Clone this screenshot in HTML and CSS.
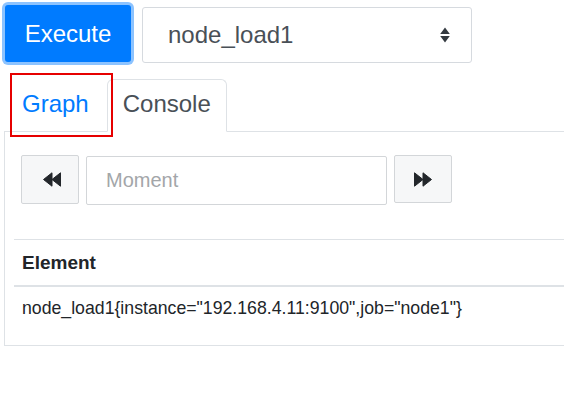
FILE: index.html
```html
<!DOCTYPE html>
<html lang="en">
<head>
<meta charset="utf-8">
<title>Prometheus</title>
<link rel="stylesheet" href="styles.css">
</head>
<body>
<div class="page">
  <div class="controls">
    <button class="execute">Execute</button>
    <div class="metric-select">
      <span class="metric-name">node_load1</span>
      <svg class="sort-icon" width="10" height="16" viewBox="0 0 10 16"><path d="M5 0.5 L9.8 7 H0.2 Z M0.2 9 H9.8 L5 15.5 Z" fill="#343a40"/></svg>
    </div>
  </div>

  <div class="tabs">
    <div class="tab">Graph</div>
    <div class="tab tab-active">Console</div>
  </div>
  <div class="highlight"></div>

  <div class="panel">
    <div class="time-row">
      <button class="step-btn">
        <svg width="18" height="15" viewBox="0 0 18 15"><path d="M0.5 7.5 L9 0.8 L9 14.2 Z M9 7.5 L17.5 0.8 L17.5 14.2 Z" fill="#23272b" stroke="#23272b" stroke-width="1" stroke-linejoin="round"/></svg>
      </button>
      <input class="moment" type="text" placeholder="Moment">
      <button class="step-btn step-fwd">
        <svg width="18" height="15" viewBox="0 0 18 15"><path d="M17.5 7.5 L9 0.8 L9 14.2 Z M9 7.5 L0.5 0.8 L0.5 14.2 Z" fill="#23272b" stroke="#23272b" stroke-width="1" stroke-linejoin="round"/></svg>
      </button>
    </div>

    <table class="results">
      <thead>
        <tr><th>Element</th></tr>
      </thead>
      <tbody>
        <tr><td>node_load1{instance="192.168.4.11:9100",job="node1"}</td></tr>
      </tbody>
    </table>
  </div>
</div>
</body>
</html>
```

FILE: styles.css
```css
html, body {
  margin: 0;
  padding: 0;
  background: #fff;
  overflow: hidden;
}

body {
  font-family: "Liberation Sans", Arial, sans-serif;
  color: #212529;
}

.page {
  position: relative;
  padding: 5px 0 0 4px;
}

.controls {
  display: flex;
  align-items: flex-start;
}

.execute {
  margin-left: 1px;
  width: 126px;
  height: 57px;
  border: none;
  border-radius: 3px;
  background: #007bff;
  color: #fff;
  font-family: "Liberation Sans", Arial, sans-serif;
  font-size: 24px;
  padding: 0;
  box-shadow: 0 0 0 3px rgba(0, 123, 255, 0.45);
}

.metric-select {
  margin-left: 11px;
  margin-top: 2px;
  width: 330px;
  height: 56px;
  box-sizing: border-box;
  border: 1px solid #d6dadf;
  border-radius: 3px;
  display: flex;
  align-items: center;
  justify-content: space-between;
  padding: 0 21px 0 25px;
  color: #495057;
  font-size: 24px;
}

.sort-icon {
  display: block;
}

.tabs {
  display: flex;
  margin-top: 16px;
  height: 52px;
  border-bottom: 1px solid #dee2e6;
}

.tab {
  box-sizing: border-box;
  height: 53px;
  margin-bottom: -1px;
  border: 1px solid transparent;
  border-radius: 6px 6px 0 0;
  padding: 10px 17px 0;
  font-size: 24px;
  line-height: 28px;
  color: #007bff;
}

.tab-active {
  padding: 10px 15px 0;
  color: #495057;
  background: #fff;
  border-color: #dee2e6 #dee2e6 #fff;
}

.highlight {
  position: absolute;
  left: 10px;
  top: 73px;
  width: 103px;
  height: 64px;
  box-sizing: border-box;
  border: 2px solid #e60000;
}

.panel {
  border: 1px solid #dee2e6;
  border-top: none;
  border-right: none;
  padding: 23px 0 14px 9px;
}

.time-row {
  display: flex;
  align-items: flex-start;
  gap: 7px;
  margin-left: 7px;
}

.step-btn {
  width: 58px;
  height: 49px;
  box-sizing: border-box;
  border: 1px solid #d3d6d9;
  border-radius: 2px;
  background: #f6f7f8;
  padding: 0;
  display: flex;
  align-items: center;
  justify-content: center;
}

.step-btn svg {
  display: block;
  margin-left: 3px;
}

.step-fwd {
  height: 48px;
}

.step-fwd svg {
  margin-left: 0;
}

.moment {
  width: 301px;
  height: 49px;
  margin-top: 1px;
  box-sizing: border-box;
  border: 1px solid #d3d6d9;
  border-radius: 2px;
  padding: 0 0 0 19px;
  font-family: "Liberation Sans", Arial, sans-serif;
  font-size: 20px;
  color: #495057;
  outline: none;
}

.moment::placeholder {
  color: #a3a6a9;
}

.results {
  margin-top: 34px;
  width: 100%;
  border-collapse: collapse;
  line-height: 27px;
}

.results th {
  text-align: left;
  font-size: 19px;
  font-weight: bold;
  color: #212529;
  padding: 9px 8px;
  border-top: 1px solid #dee2e6;
  border-bottom: 2px solid #dee2e6;
}

.results td {
  font-size: 17.7px;
  padding: 8px 8px 9px;
  color: #212529;
}
```
